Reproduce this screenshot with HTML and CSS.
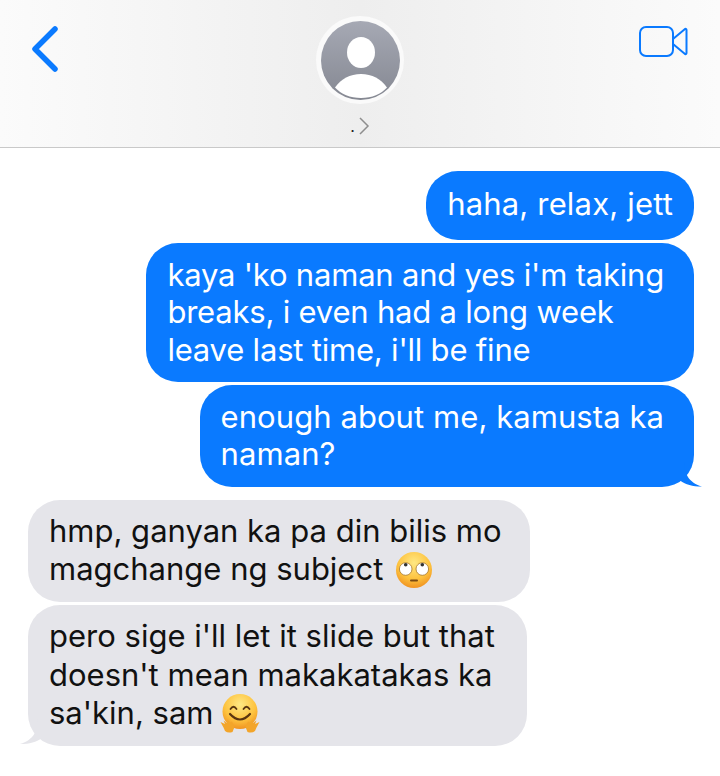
FILE: index.html
```html
<!DOCTYPE html>
<html lang="en">
<head>
    <meta charset="UTF-8">
    <meta name="viewport" content="width=device-width, initial-scale=1.0">
    <title>Messages</title>
    <link rel="stylesheet" href="styles.css">
</head>
<body>
    <header class="top-bar">
        <svg class="back-icon" width="30" height="50" viewBox="0 0 30 50">
            <path d="M25 5 L5 25 L25 45" fill="none" stroke="#0a7aff" stroke-width="5.500" stroke-linecap="round" stroke-linejoin="round"/>
        </svg>
        <div class="contact">
            <div class="avatar">
                <svg width="79" height="79" viewBox="0 0 79 79">
                    <defs>
                        <linearGradient id="avatarBg" x1="0" y1="0" x2="0" y2="1">
                            <stop offset="0" stop-color="#a6a9b4"/>
                            <stop offset="1" stop-color="#858892"/>
                        </linearGradient>
                    </defs>
                    <circle cx="39.500" cy="39.500" r="39.500" fill="url(#avatarBg)"/>
                    <ellipse cx="40" cy="31.500" rx="14" ry="15.500" fill="#fff"/>
                    <path d="M14 66.500 C20 58 29 53 40 53 C51 53 60 58 66 66.500 C60 73 51 77 40 77 C29 77 20 73 14 66.500 Z" fill="#fff"/>
                </svg>
            </div>
            <div class="contact-name">
                <span>.</span>
                <svg width="12" height="18" viewBox="0 0 12 18">
                    <path d="M2 1 L10 9 L2 17" fill="none" stroke="#8e8e8e" stroke-width="1.500"/>
                </svg>
            </div>
        </div>
        <svg class="video-icon" width="50" height="34" viewBox="0 0 50 34">
            <rect x="2" y="2" width="33" height="29" rx="6" fill="none" stroke="#0a7aff" stroke-width="2"/>
            <path d="M35 14 L47 4 Q48.500 3.500 48.500 5 V28 Q48.500 29.500 47 29 L35 19 Z" fill="none" stroke="#0a7aff" stroke-width="2" stroke-linejoin="round"/>
        </svg>
    </header>

    <main class="messages">
        <div class="bubble sent short">haha, relax, jett</div>
        <div class="bubble sent tight">kaya 'ko naman and yes i'm taking<br>breaks, i even had a long week<br>leave last time, i'll be fine</div>
        <div class="bubble sent tail wide">enough about me, kamusta ka<br>naman?</div>
        <div class="bubble received first">hmp, ganyan ka pa din bilis mo<br>magchange ng subject
            <svg class="emoji eye-roll" width="36" height="36" viewBox="0 0 36 36">
                <defs>
                    <radialGradient id="faceA" cx="0.5" cy="0.3" r="0.75">
                        <stop offset="0" stop-color="#ffe884"/>
                        <stop offset="0.6" stop-color="#fdc23e"/>
                        <stop offset="1" stop-color="#ee8a1c"/>
                    </radialGradient>
                </defs>
                <circle cx="18" cy="18" r="18" fill="url(#faceA)"/>
                <circle cx="9.700" cy="17" r="6.300" fill="#fff" stroke="#a5752a" stroke-width="0.800"/>
                <circle cx="26.300" cy="17" r="6.300" fill="#fff" stroke="#a5752a" stroke-width="0.800"/>
                <circle cx="9.700" cy="12.800" r="1.800" fill="#333"/>
                <circle cx="26.300" cy="12.800" r="1.800" fill="#333"/>
                <rect x="14" y="27.500" width="8" height="2" rx="1" fill="#7a4a12"/>
            </svg>
        </div>
        <div class="bubble received tail">pero sige i'll let it slide but that<br>doesn't mean makakatakas ka<br>sa'kin, sam
            <svg class="emoji hug" width="40" height="40" viewBox="0 0 40 40">
                <defs>
                    <radialGradient id="faceB" cx="0.5" cy="0.3" r="0.75">
                        <stop offset="0" stop-color="#ffe884"/>
                        <stop offset="0.6" stop-color="#fdc23e"/>
                        <stop offset="1" stop-color="#ee8a1c"/>
                    </radialGradient>
                </defs>
                <circle cx="20" cy="17.500" r="17.500" fill="url(#faceB)"/>
                <path d="M10.500 15 Q13.500 10.500 16.500 15 M23.500 15 Q26.500 10.500 29.500 15" fill="none" stroke="#5a3510" stroke-width="1.800" stroke-linecap="round"/>
                <path d="M10 20 Q20 31 30 20" fill="none" stroke="#5a3510" stroke-width="2.200" stroke-linecap="round"/>
                <path d="M0.500 28 L5 30 L3.500 26.500 L7 29 L7.500 25.500 L10 28.500 L12 27.500 L14.500 33 L12.500 38 Q8 39.500 5 37 L3.500 33.500 Z" fill="#f3a52a"/>
                <path d="M39.500 28 L35 30 L36.500 26.500 L33 29 L32.500 25.500 L30 28.500 L28 27.500 L25.500 33 L27.500 38 Q32 39.500 35 37 L36.500 33.500 Z" fill="#f3a52a"/>
            </svg>
        </div>
    </main>
</body>
</html>
```

FILE: styles.css
```css
* {
    box-sizing: border-box;
}

body {
    margin: 0;
    background-color: #fff;
    font-family: Inter, "Liberation Sans", sans-serif;
}

.top-bar {
    height: 148px;
    padding: 0 30px;
    display: grid;
    grid-template-columns: 1fr auto 1fr;
    align-items: start;
    background: linear-gradient(90deg, #fbfbfb 0%, #eeeeee 50%, #fbfbfb 100%);
    border-bottom: 1px solid #c9c9c9;
}

.back-icon {
    margin-top: 24px;
}

.video-icon {
    margin: 25px 2px 0 0;
    justify-self: end;
}

.contact {
    margin-top: 16px;
    display: flex;
    flex-direction: column;
    align-items: center;
}

.avatar {
    width: 88px;
    height: 88px;
    padding: 4.5px;
    border-radius: 50%;
    background-color: #fafafa;
}

.avatar svg {
    display: block;
}

.contact-name {
    margin-top: 13px;
    display: flex;
    align-items: flex-end;
    gap: 3px;
    font-size: 16px;
    line-height: 18px;
    color: #222;
}

.messages {
    padding: 23px 26px 0 28px;
    display: flex;
    flex-direction: column;
    gap: 3px;
}

.bubble {
    position: relative;
    padding: 12.5px 30px 14px 21px;
    border-radius: 32px;
    font-size: 31px;
    line-height: 37.5px;
    white-space: nowrap;
}

.short {
    padding: 14px 21px 17.5px;
    letter-spacing: 0.17px;
}

.tight {
    letter-spacing: -0.2px;
}

.wide {
    letter-spacing: 0.07px;
}

.sent {
    align-self: flex-end;
    background-color: #0a7aff;
    color: #fff;
}

.received {
    align-self: flex-start;
    background-color: #e5e5ea;
    color: #111;
}

.received.first {
    margin-top: 10px;
    padding-right: 28px;
    padding-bottom: 15px;
}

.received.tail {
    padding: 12px 32px 13.5px 21px;
    line-height: 38.5px;
}

.emoji {
    margin: -14px 0;
}

.eye-roll {
    margin-left: 4px;
    vertical-align: 6px;
}

.hug {
    margin-left: -2px;
    vertical-align: 4px;
}

.tail::after {
    content: "";
    position: absolute;
    bottom: 0;
    width: 26px;
    height: 26px;
}

.sent.tail::after {
    right: -8px;
    background-color: #0a7aff;
    clip-path: path("M4 0 L8 0 C8 12 12 22 26 26 C16 26 10 24 4 20 Z");
}

.received.tail::after {
    left: -8px;
    bottom: 2px;
    background-color: #e5e5ea;
    clip-path: path("M22 0 L18 0 C18 12 14 22 0 26 C10 26 16 24 22 20 Z");
}
```
